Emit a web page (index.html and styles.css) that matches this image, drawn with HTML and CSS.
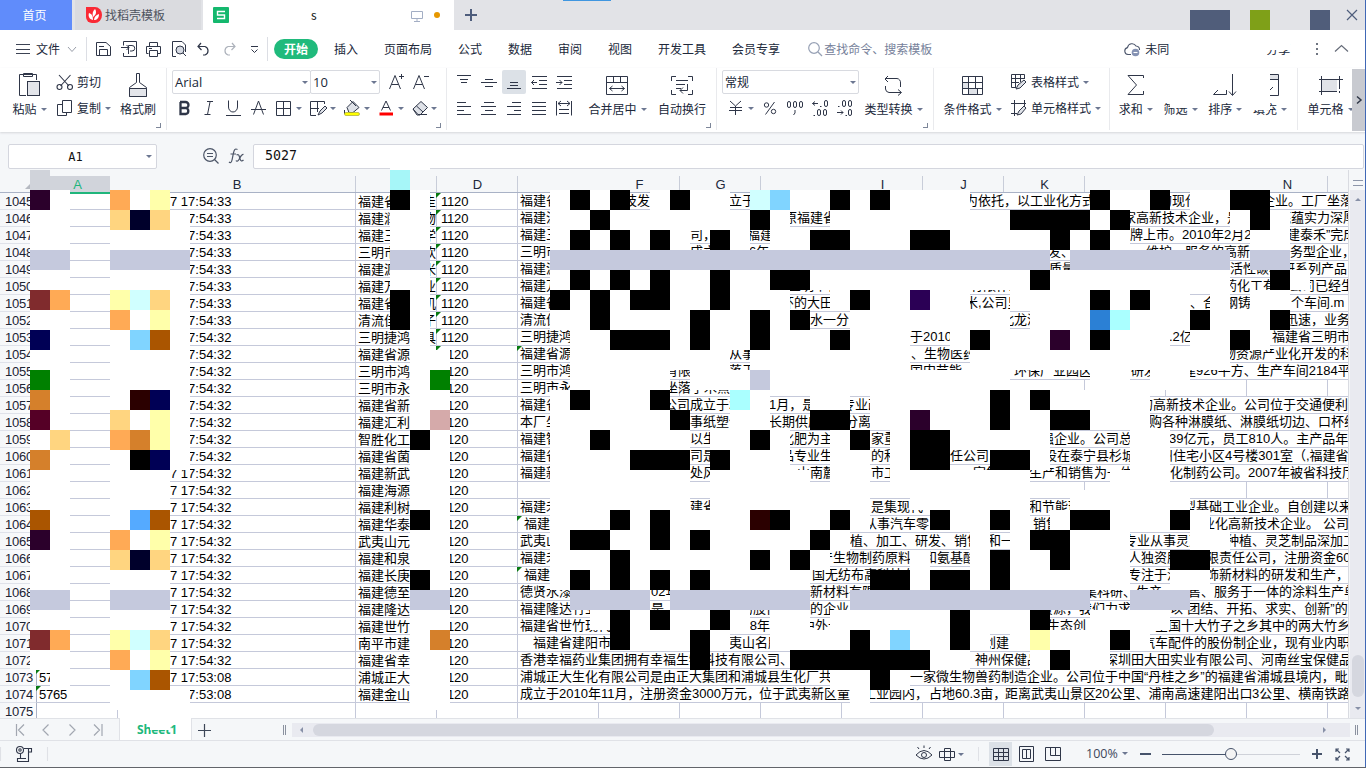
FILE: index.html
```html
<!DOCTYPE html>
<html lang="zh-CN">
<head>
<meta charset="utf-8">
<title>Sheet1</title>
<link rel="stylesheet" href="styles.css">
</head>
<body>
<div class="app">
  <div class="titlebar">
    <div class="home-tab">首页</div>
    <div class="tpl-tab">
      <svg width="16" height="16" viewBox="0 0 16 16"><path d="M0 0H9A7 8 0 0 1 9 16H6A6 6 0 0 1 0 10Z" fill="#fa2a35"/><path d="M7 13C3 12 2 9 3 6C6 7 7 9 7 13ZM7 10C6 6 7 4 9 2C11 5 10 8 7 10ZM8 13C8 10 10 8 13 7C13 11 11 13 8 13Z" fill="#fff"/></svg>
      <span>找稻壳模板</span>
    </div>
    <div class="doc-tab">
      <svg width="16" height="16" viewBox="0 0 16 16"><rect width="16" height="16" rx="1" fill="#14b86e"/><path d="M12 4.500H4.500V8H11.500V11.500H4" fill="none" stroke="#fff" stroke-width="1.400"/></svg>
      <span class="doc-name">s</span>
      <svg class="screen" width="12" height="12" viewBox="0 0 12 12" fill="none" stroke="#a3aec4"><path d="M.5 1.500H11.500V8.500H.5ZM6 8.500V11M3 11.500H9"/></svg>
      <i class="dirty"></i>
    </div>
    <svg class="new-tab" width="14" height="14" viewBox="0 0 14 14" stroke="#4e5d7c" stroke-width="2"><path d="M7 1V13M1 7H13"/></svg>
    <div class="win-blocks"><i class="wb1"></i><i class="wb2"></i><i class="wb3"></i></div>
    <svg class="close" width="12" height="12" viewBox="0 0 12 12" stroke="#4e5d7c" stroke-width="1.200"><path d="M1 1L11 11M11 1L1 11"/></svg>
  </div>

  <div class="menubar">
    <svg width="15" height="12" viewBox="0 0 15 12" stroke="#3c4354"><path d="M0 1.500H14M0 6.500H14M0 10.500H14"/></svg>
    <span class="file">文件</span>
    <svg class="file-arrow" width="10" height="7" viewBox="0 0 10 7" fill="none" stroke="#999ea9"><path d="M1 1L5 5.500L9 1"/></svg>
    <svg class="qat" width="182" height="24" viewBox="86 37 182 24" fill="none" stroke="#2f3648">
      <path d="M86.500 37V61M267.500 37V61" stroke="#dcdee4"/>
      <path d="M96.500 42.500H106L110.500 46.500V55.500H96.500ZM99.500 55V49.500H107.500V55M99 46.500H104"/>
      <path d="M123.500 45.500V41.500H136.500V56.500H123.500V53M121 47.500H129M126.500 45L129 47.500L126.500 50M128.500 54V45.500H132A2.700 2.700 0 0 1 132 51H130"/>
      <path d="M149.500 46V42.500H157.500V46M148.500 53.500H146.500V46.500H160.500V53.500H158M149.500 50.500H157.500V56.500H149.500ZM149 48.500H152"/>
      <path d="M176 56.500H172.500V41.500H182L185.500 45V52"/><circle cx="180" cy="50" r="4" fill="#d5d9e2"/><path d="M183 53L186 56"/>
      <path d="M201 43L198 46.500L201.500 50M198 46.500H205A4.500 4.500 0 0 1 205 55H203" stroke-width="1.200"/>
      <path d="M232 43L235 46.500L231.500 50M235 46.500H228A4.500 4.500 0 0 0 228 55H230" stroke="#adb2bb" stroke-width="1.200"/>
      <path d="M251 46.500H258M251.500 49.500L254.500 52.500L257.500 49.500"/>
    </svg>
    <span class="tab active">开始</span><span class="tab">插入</span><span class="tab">页面布局</span><span class="tab">公式</span><span class="tab">数据</span><span class="tab">审阅</span><span class="tab">视图</span><span class="tab">开发工具</span><span class="tab">会员专享</span>
    <svg class="search-icon" width="15" height="15" viewBox="0 0 15 15" fill="none" stroke="#97a1b5" stroke-width="1.200"><circle cx="6" cy="6" r="5.300"/><path d="M10 10L14 14"/></svg>
    <span class="search">查找命令、搜索模板</span>
    <svg class="cloud" width="17" height="15" viewBox="0 0 17 15" fill="none" stroke="#4b556b" stroke-width="1.100"><path d="M7 12.500H4A3.500 3.500 0 0 1 3.500 5.600A4.600 4.600 0 0 1 12 4A3.800 3.800 0 0 1 15.500 8"/><circle cx="11.500" cy="10.500" r="3.800" fill="#8592b3" stroke="none"/><path d="M9.500 10.500H13.500" stroke="#fff"/></svg>
    <span class="sync">未同</span>
    <span class="share">分享</span>
    <svg class="menu-end" width="36" height="14" viewBox="0 0 36 14"><path d="M3 1h2v2H3zM3 6h2v2H3zM3 11h2v2H3z" fill="#6e7480"/><path d="M22 9.500L28.500 3.500L35 9.500" fill="none" stroke="#666c79" stroke-width="1.200"/></svg>
  </div>

  <div class="ribbon">
    <div class="group g-clip">
      <div class="big paste"><svg width="24" height="28" viewBox="17 70 24 28" fill="none" stroke="#2f3648"><path d="M26 95.500H19.500V74.500H36.500V80M23.500 76.500V73.500H32.500V76.500Z"/><rect x="27.500" y="81.500" width="12" height="14" fill="#e3e5ea"/></svg><span>粘贴<b class="dd"></b></span></div>
      <div class="small-col">
        <div><svg width="18" height="18" viewBox="56 73 18 18" fill="none" stroke="#2f3648" stroke-width="1.100"><path d="M59 75L69 86M70.500 75L60.500 86"/><circle cx="59.500" cy="87" r="2.500"/><circle cx="70" cy="87" r="2.500"/></svg><span>剪切</span></div>
        <div><svg width="18" height="18" viewBox="56 99 18 18" fill="none" stroke="#2f3648"><path d="M62.500 100.500H71.500V112.500H62.500ZM62 104.500H57.500V115.500H66.500V113"/></svg><span>复制<b class="dd"></b></span></div>
      </div>
      <div class="big brush"><svg width="24" height="28" viewBox="126 70 24 28" fill="none" stroke="#2f3648"><path d="M136.500 73.500H139.500V82.500L146.500 87.500V96.500H129.500V87.500L136.500 82.500Z"/><path d="M129.500 88.500H146.500V96.500H129.500Z" fill="#e3e5ea"/></svg><span>格式刷</span></div>
      <i class="corner"></i>
    </div>
    <div class="group g-font">
      <div class="row">
        <div class="combo font"><span>Arial</span><b class="dd"></b></div><div class="combo size"><span>10</span><b class="dd"></b></div>
        <svg width="56" height="24" viewBox="384 70 56 24" fill="none" stroke="#2f3648"><path d="M389.500 89L395 75.500L400.500 89M391.500 84.500H398.500M399 76.500H404M401.500 74V79M413.500 89L419 75.500L424.500 89M415.500 84.500H422.500M424 76.500H429"/></svg>
      </div>
      <svg width="272" height="24" viewBox="172 96 272 24" fill="none" stroke="#2f3648">
        <path d="M180 102H185.500A3 3 0 0 1 185.500 108H180.500V102V114H186A3.100 3.100 0 0 0 186 108" stroke-width="2.300"/>
        <path d="M207 101.500H213M204.500 114.500H210.500M210 102L207.500 114.500M228.500 100.500V107A4.500 5 0 0 0 237.500 107V100.500M226 115.500H241M253.500 114.500L258.500 101L263.500 114.500M251 109.500H266"/>
        <path d="M276.500 101.500H290.500V115.500H276.500ZM283.500 102V115M277 108.500H290M316 115.500H310.500V101.500H324.500V104M317.500 102V112M311 108.500H319"/><path d="M318 115L320 111L325 106L327 108L322 113Z" fill="#dfe2e8"/>
        <path d="M347 107.500L353 101.500L359 107.500L353 112.500H349Z" fill="#dfe2e8"/><path d="M344.500 114V110M350 100L356 106"/><rect x="344.500" y="112.500" width="15" height="3" rx="1.500" fill="#ff0" stroke="#a9a83a" stroke-width=".7"/>
        <path d="M381.500 110.500L386 101L390.500 110.500M383 107.500H389"/><path d="M379.500 114H393" stroke="red" stroke-width="3"/>
        <path d="M413 109L421 101.500L427.500 107.500L420 115H417Z" fill="#dfe2e8"/><path d="M413 109L418 114.500H427M416.500 106L423 112"/>
        <path d="M296 107h6l-3 3zM330 107h6l-3 3zM364 107h6l-3 3zM398 107h6l-3 3zM431 107h6l-3 3z" fill="#6c7791" stroke="none"/>
      </svg>
      <i class="corner"></i>
    </div>
    <div class="group g-align">
      <svg width="133" height="52" viewBox="447 70 133 52" fill="none" stroke="#2f3648">
        <rect x="502" y="70" width="24" height="24" rx="2" fill="#dce1e7" stroke="none"/>
        <path d="M457 75.500H471M460 79.500H468M461 82.500H467M481 82.500H497M485 79.500H493M485 86.500H493M510 82.500H518M510 85.500H518M507 88.500H521"/>
        <path d="M532 76.500H547M539 80.500H547M539 84.500H547M532 88.500H547M531.500 82.500H537M534 80L531.500 82.500L534 85M557 76.500H572M564 80.500H572M564 84.500H572M557 88.500H572M556 82.500H562M559.500 80L562 82.500L559.500 85"/>
        <path d="M457 102.500H466M457 106.500H471M457 110.500H464M457 114.500H471M484 102.500H494M481 106.500H496M485 110.500H493M481 114.500H496M512 102.500H521M507 106.500H521M514 110.500H521M507 114.500H521M532 102.500H546M532 106.500H546M532 110.500H546M532 114.500H546M556.500 101V115.500M571.500 101V115.500M558 103.500H570M561 101L558 103.500L561 106M567 101L570 103.500L567 106M559 109.500H569M559 113.500H569"/>
      </svg>
      <div class="big merge"><svg width="24" height="28" viewBox="605 70 24 28" fill="none" stroke="#2f3648"><path d="M606.500 76.500H627.500V94.500H606.500ZM606.500 82.500H627.500M613.500 76.500V82M620.500 76.500V82M609.500 88.500H624.500M612.500 86L609.500 88.500L612.500 91M621.500 86L624.500 88.500L621.500 91"/></svg><span>合并居中<b class="dd"></b></span></div>
      <div class="big wrap"><svg width="24" height="28" viewBox="670 70 24 28" fill="none" stroke="#2f3648"><path d="M676 76.500H671.500V81M688 76.500H692.500V81M671.500 90V94.500H676M692.500 90V94.500H688M676 80.500H688M676 84.500H685M687.500 84V90.500H680M683 87.500L680 90.500L683 93.500M676 88.500H681"/></svg><span>自动换行</span></div>
      <i class="corner"></i>
    </div>
    <div class="group g-num">
      <div class="num-col">
        <div class="combo fmt"><span>常规</span><b class="dd"></b></div>
        <svg width="140" height="24" viewBox="722 96 140 24" fill="none" stroke="#2f3648">
          <path d="M730 101L735.500 106L741 101M735.500 106V115M730 107.500H742M729 110.500H742"/><path d="M748 107h6l-3 3z" fill="#6c7791" stroke="none"/>
          <circle cx="766.500" cy="105" r="2.200"/><circle cx="773.500" cy="111.500" r="2.200"/><path d="M774.500 102L765.500 114.500"/>
          <rect x="787.500" y="101.500" width="3" height="6" rx="1.500"/><rect x="793.500" y="101.500" width="3" height="6" rx="1.500"/><rect x="799.500" y="101.500" width="3" height="6" rx="1.500"/><path d="M795 110V113L793.500 115M812.500 103.500H818M815 101.500L812.500 103.500L815 105.500M820 106.500H821.500"/>
          <rect x="824.500" y="100.500" width="3" height="6" rx="1.500"/><rect x="817.500" y="109.500" width="3" height="6" rx="1.500"/><rect x="823.500" y="109.500" width="3" height="6" rx="1.500"/><path d="M813.500 115.500H815M838 106.500H839.500"/>
          <rect x="842.500" y="100.500" width="3" height="6" rx="1.500"/><rect x="848.500" y="100.500" width="3" height="6" rx="1.500"/><path d="M837 112.500H843M841 110.500L843 112.500L841 114.500M845.500 115.500H847"/><rect x="848.500" y="109.500" width="3" height="6" rx="1.500"/>
        </svg>
      </div>
      <div class="big conv"><svg width="24" height="28" viewBox="881 70 24 28" fill="none" stroke="#2f3648"><path d="M888 76L885 79L888 82M885 78.500H897A4 4 0 0 1 900.500 83V87M898 89.500L901.500 92.500L898 95.500M901 92.500H889A4 4 0 0 1 885.500 89V86"/></svg><span>类型转换<b class="dd"></b></span></div>
      <i class="corner"></i>
    </div>
    <div class="group g-style">
      <div class="big cond"><svg width="24" height="28" viewBox="959 70 24 28" fill="none" stroke="#2f3648"><path d="M968 89h8v5h-8zM962 83h5v5h-5z" fill="#dfe2e8" stroke="none"/><path d="M961.500 76.500H981.500V94.500H961.500ZM961.500 82.500H981.500M961.500 88.500H981.500M967.500 76.500V82M974.500 76.500V88M967.500 82.500V94M976.500 88.500V94"/></svg><span>条件格式<b class="dd"></b></span></div>
      <div class="small-col">
        <div><svg width="18" height="18" viewBox="1010 73 18 18" fill="none" stroke="#2f3648"><path d="M1016 87.500H1011.500V74.500H1024.500V79M1011.500 78.500H1024M1011.500 82.500H1019M1015.500 75V87M1020.500 75V82"/><path d="M1016 89L1018 85L1024 80L1026 82L1020 88Z" fill="#dfe2e8"/></svg><span>表格样式<b class="dd"></b></span></div>
        <div><svg width="18" height="18" viewBox="1010 99 18 18" fill="none" stroke="#2f3648"><path d="M1011 103.500H1026M1014.500 100V116M1024.500 100V106M1011 113.500H1017"/><path d="M1017 115L1019 111L1024 106L1026 108L1021 114Z" fill="#dfe2e8"/></svg><span>单元格样式<b class="dd"></b></span></div>
      </div>
    </div>
    <div class="group g-edit">
      <div class="big"><svg width="24" height="28" viewBox="1123 70 24 28" fill="none" stroke="#2f3648"><path d="M1143.500 78V75.500H1128L1136.500 85L1128 94.500H1143.500V91"/></svg><span>求和<b class="dd"></b></span></div>
      <div class="big"><svg width="24" height="28" viewBox="0 0 24 28"></svg><span>筛选<b class="dd"></b></span></div>
      <div class="big"><svg width="24" height="28" viewBox="1213 70 24 28" fill="none" stroke="#2f3648"><path d="M1232.500 74V95M1229 91.500L1232.500 95.500L1236 91.500M1226.500 90V94.500H1213.500L1218 90"/></svg><span>排序<b class="dd"></b></span></div>
      <div class="big"><svg width="24" height="28" viewBox="1257 70 24 28" fill="none" stroke="#2f3648"><path d="M1269 75H1278V79H1269Z" fill="#e1e3e8" stroke="none"/><path d="M1265 74.500H1278.500V95.500H1270M1269 79.500H1278M1269 91L1273 87"/></svg><span>填充<b class="dd"></b></span></div>
    </div>
    <div class="group g-cell">
      <div class="big"><svg width="26" height="28" viewBox="1316 70 26 28" fill="none" stroke="#2f3648"><path d="M1321 80H1336V91H1321Z" fill="#e1e3e8" stroke="none"/><path d="M1318 79.500H1342M1320.500 76V95M1318 91.500H1336M1338.500 76V89M1338.500 91v2"/></svg><span>单元格<b class="dd"></b></span></div>
    </div>
    <div class="ribbon-more"><svg width="8" height="12" viewBox="0 0 8 12" fill="none" stroke="#303747" stroke-width="1.500"><path d="M2 2.500L6 6L2 9.500"/></svg></div>
  </div>

  <div class="formula">
    <div class="namebox"><span>A1</span><b class="dd"></b></div>
    <svg width="46" height="20" viewBox="200 146 46 20" fill="none" stroke="#4c5567" stroke-width="1.200"><circle cx="210" cy="155" r="6.300"/><path d="M214.500 159.500L218.500 163.500M207 153.500H213M207 156.500H213"/><path d="M237.500 149.500C235 148 234 150 233.500 153L232 160C231.500 163 230 163 229 162M230.500 154H236M236.500 155C239 153.500 239 156 240 158.500C240.500 161.500 242 161.500 243.500 160M243.500 154.500C241.500 154 240.500 157 239 159.500C238 161.500 236.500 161.500 236 160.500"/></svg>
    <div class="fx-input">5027</div>
  </div>

  <div class="sheet">
    <div class="grid-wrap">
      <div class="colheads" id="heads"></div>
      <div class="rows" id="rows"></div>
    </div>
    <div class="vscroll">
      <div class="vsplit"></div>
      <div class="vtrack"><i class="up"></i><i class="vthumb"></i><i class="down"></i></div>
    </div>
    <div class="mosaic" id="mosaic"></div>
  </div>

  <div class="tabsbar">
    <svg width="119" height="22" viewBox="0 718 119 22" fill="none" stroke="#a2a7b1" stroke-width="1.200"><path d="M16.500 723V735M24 723.500L18.500 729L24 734.500M48.500 723.500L43 729L48.500 734.500M69.500 723.500L75 729L69.500 734.500M94 723.500L99.500 729L94 734.500M102 723V735"/></svg>
    <div class="sheet-tab">Sheet1</div>
    <svg width="26" height="22" viewBox="192 718 26 22" stroke="#3d4758" stroke-width="1.200"><path d="M204.500 723V736M198 729.500H211"/></svg>
    <i class="grip"></i>
    <div class="hscroll"><i class="left"></i><i class="hthumb"></i><i class="right"></i></div>
    <i class="grip g2"></i>
  </div>

  <div class="status">
    <svg class="macro" width="60" height="24" viewBox="0 742 60 24" fill="none" stroke="#2f3648" stroke-width="1.100"><path d="M.5 747V761M47.500 747V761" stroke="#dfe1e6"/><circle cx="20" cy="750" r="3.500"/><circle cx="20" cy="750" r="1.200"/><path d="M24 748.500H31.500V752H28.500V761.500H17.500V758.500H26M28.500 748.500V752M20.500 754V758"/></svg>
    <svg class="views" width="166" height="24" viewBox="912 742 166 24" fill="none" stroke="#2f3648">
      <path d="M916 755Q924 746 932 755Q924 763 916 755ZM919 749L917.500 747M924 748V745.500M929 749L930.500 747"/><circle cx="924" cy="755" r="2.500"/>
      <path d="M944.500 748.500H950.500V760.500H944.500ZM939.500 751.500H954.500V757.500H939.500Z"/><path d="M958 753h6l-3 3z" fill="#6c7791" stroke="none"/><path d="M978.500 747V761" stroke="#dfe1e6"/>
      <rect x="989" y="742" width="23" height="24" fill="#dce1e7" stroke="none"/><path d="M993.500 748.500H1008.500V760.500H993.500ZM993.500 752.500H1008.500M993.500 756.500H1008.500M998.500 748.500V760.500M1003.500 748.500V760.500M1019.500 746.500H1033.500V761.500H1019.500ZM1022.500 749.500H1026.500V758.500H1022.500ZM1026.500 749.500H1030.500V758.500H1026.500ZM1045.500 747.500H1060.500V760.500H1045.500ZM1050.500 747.500V755.500H1060.500M1055.500 747.500V755"/>
    </svg>
    <span class="zoom">100%<b class="dd"></b></span>
    <svg class="zoom-bar" width="220" height="24" viewBox="1136 742 220 24" fill="none" stroke="#46536b"><path d="M1140 754H1151M1312 754H1322M1317 749V759" stroke-width="2"/><path d="M1162 754.500H1230"/><path d="M1236 754.500H1300" stroke="#cfd2d9"/><circle cx="1231" cy="754" r="5.500" fill="#f4f4f4"/><path d="M1336 752V749H1339M1336 749L1340 753M1349 752V749H1346M1349 749L1345 753M1336 757V760H1339M1336 760L1340 756M1349 757V760H1346M1349 760L1345 756" stroke-width="1.200"/></svg>
  </div>
  <i class="top-accent"></i><i class="right-edge"></i>
  <i class="patch p1"></i><i class="patch p2"></i><i class="patch p3"></i><i class="patch p4"></i><i class="patch p5"></i><i class="patch p6"></i>
</div>
<script src="sheet.js"></script>
</body>
</html>
```
FILE: styles.css
```css
*{box-sizing:border-box}
body{margin:0;background:#fff}
.app{position:relative;width:1366px;height:768px;overflow:hidden;display:flex;flex-direction:column;font-family:"Noto Sans CJK SC",sans-serif;font-size:12px;line-height:16px;color:#20283a;background:#fff;border-bottom:1px solid #62656a}
svg{display:block;flex:none}
i{display:block;font-style:normal;flex:none}
.titlebar{height:30px;flex:none;display:flex;align-items:center;background:#e2e3e7}
.home-tab{width:72px;height:30px;line-height:30px;text-align:center;padding-right:3px;color:#fff;background:#608cfb}
.tpl-tab{width:126px;height:30px;margin-left:3px;padding-left:11px;display:flex;align-items:center;gap:3px;background:#dadbdf;color:#4e535e}
.doc-tab{width:251px;height:30px;margin-left:2px;padding-left:10px;display:flex;align-items:center;background:#fff}
.doc-name{margin-left:81px;width:101px;padding-left:1px;color:#111}
.screen{margin-top:2px}
.dirty{width:6px;height:6px;border-radius:3px;background:#e69700;margin-left:11px}
.new-tab{margin-left:10px}
.win-blocks{margin-left:712px;height:30px;padding-top:10px;display:flex}
.win-blocks i{height:20px}
.wb1{width:40px;background:#505d7a}
.wb2{width:20px;margin-left:20px;background:#7fa018}
.wb3{width:20px;margin-left:40px;background:#505d7a}
.close{margin-left:16px}
.menubar{height:38px;flex:none;display:flex;align-items:center;padding-left:16px}
.file{margin-left:5px;width:31px;line-height:16px}
.file-arrow{margin-left:0}
.qat{margin-left:9px}
.tab{margin-right:26px;white-space:nowrap}
.tab.active{width:44px;height:20px;line-height:19px;margin:0 16px 0 6px;border-radius:10px;text-align:center;background:#20ba7c;color:#fff;font-weight:700}
.search-icon{margin-left:2px}
.search{margin-left:1px;width:108px;color:#76819a;white-space:nowrap}
.cloud{margin-left:192px}
.sync{margin-left:4px;width:24px}
.share{margin-left:97px;width:24px}
.menu-end{margin-left:23px}
.ribbon{height:64px;flex:none;display:flex;box-shadow:0 1px 2px #d5d7da;z-index:1}
.group{position:relative;height:62px;border-right:1px solid #e9eaed;display:flex;align-items:flex-start;flex:none;padding-top:2px}
.corner{position:absolute;right:5px;bottom:2px;width:5px;height:5px;border-right:1px solid #7d8699;border-bottom:1px solid #7d8699}
.dd{display:inline-block;border:3px solid transparent;border-top:3px solid #6c7791;border-bottom:0;margin-left:4px;margin-right:-1px;vertical-align:3px}
.big{display:flex;flex-direction:column;align-items:center;gap:3px;white-space:nowrap;flex:none}
.big span{height:16px}
.g-clip{width:167px}
.paste{width:50px;margin-left:4px}
.small-col{display:flex;flex-direction:column;gap:8px;padding-top:3px}
.small-col>div{display:flex;align-items:center;height:18px;gap:3px;white-space:nowrap}
.g-clip .small-col{width:58px;margin-left:2px}
.brush{width:52px;margin-left:-2px}
.g-font{width:280px;padding-left:5px;flex-direction:column;gap:2px}
.row{display:flex}
.combo{height:24px;border:1px solid #d8dae0;border-radius:2px;display:flex;align-items:center;justify-content:space-between;padding:0 3px 0 2px}
.combo .dd{vertical-align:0}
.font{width:139px}
.size{width:70px;margin-left:-1px}
.font,.size{font-size:13px;font-family:"Open Sans",sans-serif}
.size+svg{margin-left:4px}
.g-align{width:270px}
.merge{width:74px}
.wrap{width:56px}
.g-num{width:217px;padding-left:5px}
.num-col{width:137px;display:flex;flex-direction:column;gap:2px}
.fmt{width:137px}
.conv{width:68px}
.g-style{width:176px;padding-left:8px}
.cond{width:60px}
.g-style .small-col{margin-left:8px}
.g-edit{width:188px;padding-left:3px}
.g-edit .big{width:44.700px}
.g-cell{width:54px;padding-left:7px;border:0;overflow:hidden}
.g-cell .big{width:50px}
.ribbon-more{width:13px;height:62px;margin-top:1px;background:#c8cad0;display:flex;align-items:center;justify-content:center}
.formula{height:38px;flex:none;display:flex;align-items:center;background:#f5f7f9;padding:10px 2px 0 8px}
.namebox,.fx-input{height:25px;border:1px solid #d4d6de;border-radius:2px;background:#fff;font-family:"DejaVu Sans Mono",monospace;color:#111}
.namebox{width:149px;display:flex;align-items:center;padding-right:2px}
.namebox span{width:133px;text-align:center;padding-top:2px}
.namebox+svg{margin-left:43px}
.fx-input{width:1111px;margin-left:7px;padding-left:11px;line-height:21px;font-size:13.300px}
.sheet{position:relative;height:548px;flex:none;display:flex;background:#f5f7f9}
.grid-wrap{width:1349px;height:548px;overflow:hidden;font-family:"Liberation Sans","Noto Sans CJK SC",sans-serif;font-size:13px;border-right:1px solid #d9dbe1}
.colheads{height:23px;padding-top:6px;display:flex;border-bottom:1px solid #a9b2c6}
.colheads span{height:16px;line-height:17px;padding-left:1px;text-align:center;border-right:1px solid #c8cdd9;flex:none}
.colheads .bare{border-color:transparent}
.colheads .corner-cell{display:flex;justify-content:flex-end;align-items:flex-end;padding:0 6px 3px 0}
.corner-cell i{border-left:5px solid transparent;border-bottom:5px solid #b6bac2}
.colheads .sel{background:#d1d4db;color:#1fb57b;box-shadow:0 2px #1fb57b}
.r{height:17px;display:flex;background:#fff;white-space:nowrap}
.r>div{height:17px;border-right:1px solid #c5c9da;border-bottom:1px solid #c5c9da;flex:none;line-height:17px;color:#000;position:relative}
.r .rh{width:37px;background:linear-gradient(90deg,#f5f7f9,#fcfcfd);border-right-color:#aab2c6;border-bottom-color:#dfe2ea;padding-left:5px;color:#1c2434;letter-spacing:-.2px}
.r .ca{width:81px;padding-left:2px;letter-spacing:-.2px}
.r .cb{width:238px;padding-left:52px}
.r .cc{width:81px;padding-left:2px;display:flex;padding-top:1px;line-height:15px}
.cc span:first-child{width:65px;overflow:hidden}
.r .cd{width:81px;padding-left:4px;letter-spacing:-.2px}
.r .ce{width:831px;padding-left:2px;display:flex;border-right:0;line-height:15px}
.ce span{flex:none}
.r .ce.lines{background:repeating-linear-gradient(90deg,transparent 0 80px,#c5c9da 80px 81px)}
.flag::before{content:"";position:absolute;left:-1px;top:0;border-top:5px solid #087a12;border-right:5px solid transparent}
.vscroll{width:17px;padding-left:1px}
.vsplit{height:20px;padding-top:10px;display:flex;justify-content:center}
.vsplit::before{content:"";width:10px;height:4px;border-top:1px solid #8d96aa;border-bottom:1px solid #8d96aa}
.vtrack{height:528px;background:#e9eaf0;display:flex;flex-direction:column;align-items:center}
.up{border:3px solid transparent;border-bottom:3px solid #8790a7;border-top:0;margin-top:8px}
.vthumb{width:12px;height:42px;border-radius:6px;background:#d5d7df;margin-top:454px}
.down{border:3px solid transparent;border-top:3px solid #8790a7;border-bottom:0;margin-top:10px}
.mosaic{position:absolute;left:0;top:0;width:1348px}
.band{height:20px;display:flex}
.band i{height:20px}
.tabsbar{height:23px;flex:none;display:flex;align-items:center;background:#f5f7f9;border-top:1px solid #e0e2e7;border-bottom:1px solid #e0e2e7}
.sheet-tab{width:73px;height:22px;margin-top:-1px;padding-left:3px;background:#fff;border:1px solid #e0e2e7;border-width:0 1px;text-align:center;line-height:23px;color:#20b87c;font-family:"Open Sans",sans-serif;font-weight:700;letter-spacing:-.1px}
.grip{width:3px;height:10px;border:1px solid #8b92a0;border-width:0 1px;margin-left:65px}
.g2{margin-left:5px}
.hscroll{width:1058px;height:14px;margin-left:6px;background:#e9eaf0;display:flex;align-items:center}
.left{border:3px solid transparent;border-right:3px solid #8790a7;border-left:0;margin-left:8px}
.hthumb{width:901px;height:12px;border-radius:6px;background:#d5d7df;margin-left:10px}
.right{border:3px solid transparent;border-left:3px solid #8790a7;border-right:0;margin-left:109px}
.status{flex:1;display:flex;align-items:center;background:#f5f7f9}
.views{margin-left:852px}
.zoom{margin-left:8px;width:50px;white-space:nowrap;font-family:"Open Sans",sans-serif;font-size:12.500px;color:#3d4659}
.top-accent{position:absolute;left:563px;top:0;width:48px;height:1px;background:#3f96e0}
.right-edge{position:absolute;right:0;top:0;width:1px;height:768px;background:#4068b6;z-index:3}
.patch{position:absolute;background:#fff;z-index:2;width:20px}
.p1{left:1170px;top:70px;height:38px}
.p2{left:1210px;top:70px;height:20px}
.p3{left:1250px;top:70px;height:40px}
.p4{left:1250px;top:30px;width:40px;height:20px}
.p5{left:150px;top:719px;height:11px}
.p6{left:390px;top:150px;width:40px;height:20px}
```
FILE: sheet.js
```js
const colors = {
  w: '#fff', k: '#000', g: '#c5c9dd', o: '#ffaa55', y: '#ffffaa', p: '#ffd580', c: '#d0ffff', b: '#80d4ff',
  n: '#000055', m: '#00002b', v: '#2b002b', r: '#802b2d', d: '#d5802b', e: '#008000', t: '#aa5500', a: '#aaffff',
  u: '#550026', i: '#2b80d5', q: '#2b0055', s: '#55aaff', z: '#2b0000', f: '#d5aaaa', h: '#d0d3da', l: '#a6f6f8', x: '#f5f7f9'
};
// Each token is a colour key followed by the right edge of its run; "." leaves the sheet visible.
const bands = [
  '.30 h50 .110 x170 .390 l410 x430 .1348',
  '.30 v50 w70 .110 o130 w150 y170 .390 k410 w430 .550 w570 k590 w610 k630 .650 w670 k690 w730 .750 c770 b790 w830 k850 w870 k890 w970 .1090 k1110 w1150 k1170 .1190 w1230 k1270 .1348',
  '.30 w70 .110 p130 m150 p170 w190 .390 w430 .550 w590 k610 w750 k770 w790 .830 w1010 k1090 w1110 k1130 .1230 w1250 k1270 w1290 .1348',
  '.30 w70 .110 w190 .390 w430 .550 w570 k590 w610 k630 w650 k670 w690 .710 k730 w750 .770 w810 k850 w910 k950 w1050 k1070 w1090 k1110 w1130 .1250 w1290 .1348',
  '.30 g70 .110 g190 .390 g430 .550 g1050 .1070 g1230 .1250 g1290 .1348',
  '.30 w70 .110 w190 .390 w430 .550 w570 k590 w610 k630 w650 k670 w710 k730 w770 k810 w1030 k1050 w1230 .1270 k1290 w1310 .1348',
  '.30 r50 o70 .110 y130 c150 p170 w190 .390 k410 w430 .550 k570 w590 k610 w630 k670 w710 k730 w790 .830 w850 k870 w910 q930 w970 .1010 w1090 k1110 w1130 k1150 w1190 .1210 w1230 .1250 w1290 .1348',
  '.30 w70 .110 o130 w150 y170 w190 .390 k410 w430 .550 w590 k610 w690 k710 w750 k770 w790 k810 .850 w1010 .1030 w1090 i1110 a1130 w1190 k1210 w1270 k1290 .1348',
  '.30 n50 w70 .110 w130 b150 t170 w190 .410 w430 .570 w610 k670 w690 k710 w750 k770 w830 k850 w910 .950 w970 k990 w1050 v1070 w1090 k1110 w1170 .1190 w1230 k1250 w1270 .1348',
  '.30 w70 .110 w190 .410 w450 .570 w730 .750 w910 .970 w1230 .1348',
  '.30 e50 w70 .110 w190 .410 w430 e450 .570 w670 .690 w750 g770 w1010 .1090 w1130 .1150 w1190 .1348',
  '.30 d50 w70 .110 w130 z150 n170 w190 .410 w450 .550 w570 k590 w650 k670 .730 a750 w770 .810 w850 .870 w990 k1010 w1030 k1050 w1150 .1348',
  '.30 u50 w70 .110 p130 w150 y170 w190 .410 w430 f450 .550 w670 k690 .730 w770 .810 k850 .870 w910 v930 w990 k1010 w1050 k1090 w1150 .1348',
  '.30 w50 p70 .110 o130 d150 y170 w190 .410 k430 w450 .550 w590 k610 w690 .710 w750 k770 w790 .830 w850 k870 .890 w910 k950 w1050 .1130 w1170 .1348',
  '.30 d50 w70 .110 w130 k150 n170 w190 .410 w450 .550 w630 k690 .710 k730 w790 .830 w870 .890 w910 k950 .990 k1030 w1050 .1130 w1170 .1348',
  '.30 w70 .110 w170 .410 w450 .550 w690 .710 w810 .830 w870 .890 w1030 .1110 w1170 .1348',
  '.30 w70 .110 w170 .410 w450 .550 w690 .710 w870 .910 w1030 .1070 w1190 .1348',
  '.30 t50 w70 .110 w130 s150 t170 .410 k430 w450 .550 w610 k630 w650 k670 w750 z770 k790 w830 k850 w870 .930 k950 w990 k1010 w1030 .1050 w1070 k1110 w1170 k1190 w1210 .1348',
  '.30 v50 w70 .110 o130 w150 y170 .410 w450 .550 w570 k610 w650 k670 w690 k710 w810 k830 w850 .970 w990 .1010 w1030 k1070 w1130 .1190 w1230 .1348',
  '.30 w70 .110 p130 m150 p170 .410 w450 .550 w610 k630 w750 k770 w790 k810 w830 .910 w930 .970 w990 k1010 w1050 k1070 w1130 .1170 k1210 .1348',
  '.30 w70 .110 w170 .410 k430 w450 .550 w570 k590 w610 k630 w650 k670 w690 k710 w810 .870 k910 w930 k970 w990 k1010 w1130 .1170 w1210 .1348',
  '.30 g70 .110 g170 .410 g450 .570 g650 .670 g810 .850 g1090 .1130 g1190 .1348',
  '.30 w70 .110 w170 .410 w450 .590 w610 k630 w650 k670 w710 k730 w750 .770 w810 .830 w950 k970 w1030 k1050 .1090 w1170 .1348',
  '.30 r50 o70 .110 y130 c150 p170 .410 w430 d450 .610 k630 w690 k710 w730 .770 w850 k870 w890 b910 w950 k970 w990 .1010 w1030 y1050 w1110 k1130 w1150 .1348',
  '.30 w70 .110 o130 w150 y170 .410 w450 .690 k710 .790 k930 w970 .1030 w1050 k1070 w1110 .1348',
  '.50 w70 .110 w130 b150 t170 .410 w450 .830 w870 k890 w910 .1348',
  '.110 w190 .410 w450 .850 w870 .1348'
];
// Column C: visible name, then the last character of the name where it shows.
const names = [['福建省', '圭'], ['福建润', '物'], ['福建三', '学'], ['三明市', '饮'], ['福建源', '米'], ['福建万', '业'], ['福建省', '机'], ['清流佳', '子'], ['三明捷鸿', '具'],
  '福建省源', '三明市鸿', '三明市永', '福建省新', '福建汇利', '智胜化工', '福建省菌', '福建新武', '福建海源', '福建利树', '福建华泰', '武夷山元', '福建和泉', '福建长庚', '福建德至', '福建隆达', '福建世竹', '南平市建', '福建省幸', '浦城正大', '福建金山'];
// Column E onwards: text runs with their left edges.
const texts = [
  [520, '福建省', 624, '技发', 729, '立于', 965, '为依托，以工业化方式', 1159, '的现代', 1262, '企业。工厂坐落'],
  [520, '福建沂', 784, '原福建省', 1123, '家高新技术企业，是', 1278, '底蕴实力深厚'],
  [520, '福建三', 690, '司，', 747, '福建三', 1130, '牌上市。2010年2月22', 1287, '建泰禾”完成'],
  [520, '三明市', 690, '成立', 749, '6年', 1048, '发、', 1120, '上、维护、服务的高新', 1277, '服务型企业，'],
  [520, '福建源', 1049, '质量', 1230, '活性碳科研系列产品'],
  [520, '福建万', 788, '三明市科', 970, '有限作生', 1224, '药化工有限公司已经生'],
  [520, '福建省', 781, '环的大田', 965, '米,公司里', 1190, '、合', 1225, '钢铸', 1291, '个车间.m'],
  [520, '清流佳', 810, '水一分', 1001, '北龙潭', 1285, '迅速，业务'],
  [520, '三明捷鸿', 910, '于2010', 1169, '.2亿元', 1272, '福建省三明市'],
  [520, '福建省源', 729, '从事', 911, '、生物医药', 1223, '物资源产业化开发的科'],
  [520, '三明市鸿', 665, '有限', 729, '落于', 910, '国内节能', 1014, '环保产业园区', 1131, '研发', 1183, '建926平方、生产车间2184平'],
  [520, '三明市永', 665, '坐落于木熹'],
  [520, '福建省', 664, '公司成立于2', 769, '1月，是', 842, '专业改', 1140, '的高新技术企业。公司位于交通便利'],
  [520, '本厂坐', 690, '事纸塑作', 769, '长期供应', 845, '分离', 1149, '购各种淋膜纸、淋膜纸切边、口杯纸'],
  [520, '福建智', 690, '以生', 781, '化肥为主', 871, '家重', 1041, '强企业。公司总', 1169, '39亿元，员工810人。主产品年产'],
  [520, '福建省', 690, '司是', 781, '品专业生', 871, '的和', 937, '责任公司,', 1044, '设在泰宁县杉城', 1160, '州住宅小区4号楼301室（,福建省'],
  [520, '福建新', 690, '处风', 797, '山南麓', 871, '市工', 960, '，家售', 1029, '生产和销售为一体', 1170, '化制药公司。2007年被省科技厅'],
  [],
  [520, '福建禾', 690, '建省', 871, '是集现代', 1029, '和节能环', 1183, '型基础工业企业。自创建以来'],
  [524, '福建', 864, '从事汽车零', 1033, '销售', 1202, '业化高新技术企业。', 1323, '公司'],
  [520, '武夷山', 850, '植、加工、研发、销售', 988, '和一体', 1124, '专业从事灵芝', 1226, '种植、灵芝制品深加工'],
  [520, '福建禾', 820, '产生物制药原料', 924, '和氨基酸', 1128, '人独资服', 1206, '限责任公司，注册资金60'],
  [524, '福建', 812, '国无纺布高科技有限', 1128, '专注于涂', 1206, '饰新材料的研发和生产，'],
  [520, '德贤水漆', 651, '02年', 810, '新材料有限', 1084, '集科研、生产、销售、服务于一体的涂料生产单'],
  [520, '福建隆达竹业', 651, '是', 740, '的股份', 810, '的企业，', 1040, '资源，我们力求', 1170, '以“团结、开拓、求实、创新”的'],
  [520, '福建省世竹现代', 728, '2008年', 802, '中外十', 1034, '，生态创', 1155, '全国十大竹子之乡其中的两大竹乡之'],
  [533, '福建省建阳市', 729, '夷山名胜', 983, '创建', 1142, '汽车配件的股份制企业，现有业内职'],
  [520, '香港幸福药业集团拥有幸福生物科技有限公司、', 975, '神州保健品', 1105, '深圳田大田实业有限公司、河南丝宝保健品'],
  [520, '浦城正大生化有限公司是由正大集团和浦城县生化厂共', 910, '一家微生物兽药制造企业。公司位于中国“丹桂之乡”的福建省浦城县境内，毗'],
  [520, '成立于2010年11月，', 640, '注册资金3000万元，', 759, '位于武夷新区童游工业园内，', 929, '占地60.3亩，', 1005, '距离武夷山景区', 1095, '20公里、浦南高速建阳出口', 1252, '3公里、横南铁路'],
  []
];
const el = (parent, tag, cls, text) => {
  const n = document.createElement(tag);
  if (cls) n.className = cls;
  if (text) n.textContent = text;
  parent.appendChild(n);
  return n;
};

const heads = document.getElementById('heads');
el(el(heads, 'span', 'corner-cell bare'), 'i').parentNode.style.width = '37px';
'A,B,C,D,E,F,G,H,I,J,K,L,M,N,O'.split(',').forEach(k => {
  const hidden = 'CEHLMO'.includes(k);
  const h = el(heads, 'span', (k === 'A' ? 'sel' : '') + ('AEHLM'.includes(k) ? ' bare' : ''), hidden ? '' : k);
  h.style.width = (k === 'B' ? 238 : 81) + 'px';
});

const rows = document.getElementById('rows');
texts.forEach((t, i) => {
  const r = el(rows, 'div', 'r');
  const last = i === 30;
  el(r, 'div', 'rh', String(1045 + i));
  el(r, 'div', 'ca' + (i === 28 || i === 29 ? ' flag' : ''), i === 28 ? '57' : i === 29 ? '5765' : '');
  el(r, 'div', 'cb', last ? '' : '7 17:' + (i < 8 ? '54:33' : i < 28 ? '54:32' : '53:08'));
  const c = el(r, 'div', 'cc');
  [].concat(names[i] || []).forEach(s => el(c, 'span', '', s));
  el(r, 'div', 'cd' + (last ? '' : ' flag'), last ? '' : '1120');
  const empty = [11, 17, 30].includes(i);
  const e = el(r, 'div', 'ce' + (empty ? ' lines' : '') + ([9, 19, 22].includes(i) ? ' flag' : ''));
  for (let j = 0; j < t.length; j += 2) {
    const s = el(e, 'span', '', t[j + 1]);
    if (j === 0) s.style.marginLeft = (t[0] - 520) + 'px';
    s.style.width = ((t[j + 2] || 1349) - t[j]) + 'px';
  }
});

const mosaic = document.getElementById('mosaic');
bands.forEach(b => {
  const band = el(mosaic, 'div', 'band');
  let x = 0;
  b.split(' ').forEach(tok => {
    const end = +tok.slice(1);
    const s = el(band, 'i');
    s.style.width = (end - x) + 'px';
    if (tok[0] !== '.') s.style.background = colors[tok[0]];
    x = end;
  });
});
```
